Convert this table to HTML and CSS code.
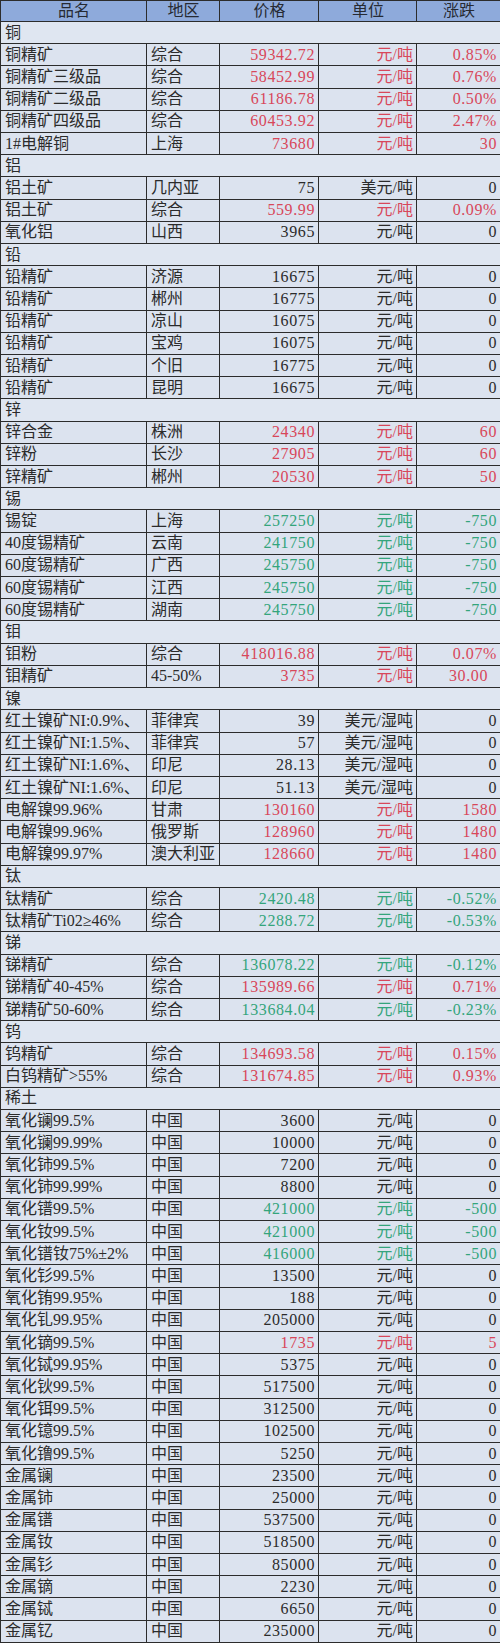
FILE: index.html
```html
<!DOCTYPE html>
<html lang="zh-CN">
<head>
<meta charset="utf-8">
<title>有色金属价格</title>
<link rel="stylesheet" href="styles.css">
</head>
<body>
<table class="price-table">
<colgroup>
<col class="c-name"><col class="c-area"><col class="c-price"><col class="c-unit"><col class="c-chg">
</colgroup>
<thead>
<tr><th>品名</th><th>地区</th><th>价格</th><th>单位</th><th>涨跌</th></tr>
</thead>
<tbody>
<tr class="cat"><td colspan="5">铜</td></tr>
<tr class="r"><td>铜精矿</td><td>综合</td><td>59342.72</td><td>元/吨</td><td>0.85%</td></tr>
<tr class="r"><td>铜精矿三级品</td><td>综合</td><td>58452.99</td><td>元/吨</td><td>0.76%</td></tr>
<tr class="r"><td>铜精矿二级品</td><td>综合</td><td>61186.78</td><td>元/吨</td><td>0.50%</td></tr>
<tr class="r"><td>铜精矿四级品</td><td>综合</td><td>60453.92</td><td>元/吨</td><td>2.47%</td></tr>
<tr class="r"><td>1#电解铜</td><td>上海</td><td>73680</td><td>元/吨</td><td>30</td></tr>
<tr class="cat"><td colspan="5">铝</td></tr>
<tr><td>铝土矿</td><td>几内亚</td><td>75</td><td>美元/吨</td><td>0</td></tr>
<tr class="r"><td>铝土矿</td><td>综合</td><td>559.99</td><td>元/吨</td><td>0.09%</td></tr>
<tr><td>氧化铝</td><td>山西</td><td>3965</td><td>元/吨</td><td>0</td></tr>
<tr class="cat"><td colspan="5">铅</td></tr>
<tr><td>铅精矿</td><td>济源</td><td>16675</td><td>元/吨</td><td>0</td></tr>
<tr><td>铅精矿</td><td>郴州</td><td>16775</td><td>元/吨</td><td>0</td></tr>
<tr><td>铅精矿</td><td>凉山</td><td>16075</td><td>元/吨</td><td>0</td></tr>
<tr><td>铅精矿</td><td>宝鸡</td><td>16075</td><td>元/吨</td><td>0</td></tr>
<tr><td>铅精矿</td><td>个旧</td><td>16775</td><td>元/吨</td><td>0</td></tr>
<tr><td>铅精矿</td><td>昆明</td><td>16675</td><td>元/吨</td><td>0</td></tr>
<tr class="cat"><td colspan="5">锌</td></tr>
<tr class="r"><td>锌合金</td><td>株洲</td><td>24340</td><td>元/吨</td><td>60</td></tr>
<tr class="r"><td>锌粉</td><td>长沙</td><td>27905</td><td>元/吨</td><td>60</td></tr>
<tr class="r"><td>锌精矿</td><td>郴州</td><td>20530</td><td>元/吨</td><td>50</td></tr>
<tr class="cat"><td colspan="5">锡</td></tr>
<tr class="g"><td>锡锭</td><td>上海</td><td>257250</td><td>元/吨</td><td>-750</td></tr>
<tr class="g"><td>40度锡精矿</td><td>云南</td><td>241750</td><td>元/吨</td><td>-750</td></tr>
<tr class="g"><td>60度锡精矿</td><td>广西</td><td>245750</td><td>元/吨</td><td>-750</td></tr>
<tr class="g"><td>60度锡精矿</td><td>江西</td><td>245750</td><td>元/吨</td><td>-750</td></tr>
<tr class="g"><td>60度锡精矿</td><td>湖南</td><td>245750</td><td>元/吨</td><td>-750</td></tr>
<tr class="cat"><td colspan="5">钼</td></tr>
<tr class="r"><td>钼粉</td><td>综合</td><td>418016.88</td><td>元/吨</td><td>0.07%</td></tr>
<tr class="r"><td>钼精矿</td><td>45-50%</td><td>3735</td><td>元/吨</td><td class="inset">30.00</td></tr>
<tr class="cat"><td colspan="5">镍</td></tr>
<tr><td>红土镍矿NI:0.9%、</td><td>菲律宾</td><td>39</td><td>美元/湿吨</td><td>0</td></tr>
<tr><td>红土镍矿NI:1.5%、</td><td>菲律宾</td><td>57</td><td>美元/湿吨</td><td>0</td></tr>
<tr><td>红土镍矿NI:1.6%、</td><td>印尼</td><td>28.13</td><td>美元/湿吨</td><td>0</td></tr>
<tr><td>红土镍矿NI:1.6%、</td><td>印尼</td><td>51.13</td><td>美元/湿吨</td><td>0</td></tr>
<tr class="r"><td>电解镍99.96%</td><td>甘肃</td><td>130160</td><td>元/吨</td><td>1580</td></tr>
<tr class="r"><td>电解镍99.96%</td><td>俄罗斯</td><td>128960</td><td>元/吨</td><td>1480</td></tr>
<tr class="r"><td>电解镍99.97%</td><td>澳大利亚</td><td>128660</td><td>元/吨</td><td>1480</td></tr>
<tr class="cat"><td colspan="5">钛</td></tr>
<tr class="g"><td>钛精矿</td><td>综合</td><td>2420.48</td><td>元/吨</td><td>-0.52%</td></tr>
<tr class="g"><td>钛精矿Ti02≥46%</td><td>综合</td><td>2288.72</td><td>元/吨</td><td>-0.53%</td></tr>
<tr class="cat"><td colspan="5">锑</td></tr>
<tr class="g"><td>锑精矿</td><td>综合</td><td>136078.22</td><td>元/吨</td><td>-0.12%</td></tr>
<tr class="r"><td>锑精矿40-45%</td><td>综合</td><td>135989.66</td><td>元/吨</td><td>0.71%</td></tr>
<tr class="g"><td>锑精矿50-60%</td><td>综合</td><td>133684.04</td><td>元/吨</td><td>-0.23%</td></tr>
<tr class="cat"><td colspan="5">钨</td></tr>
<tr class="r"><td>钨精矿</td><td>综合</td><td>134693.58</td><td>元/吨</td><td>0.15%</td></tr>
<tr class="r"><td>白钨精矿&gt;55%</td><td>综合</td><td>131674.85</td><td>元/吨</td><td>0.93%</td></tr>
<tr class="cat"><td colspan="5">稀土</td></tr>
<tr><td>氧化镧99.5%</td><td>中国</td><td>3600</td><td>元/吨</td><td>0</td></tr>
<tr><td>氧化镧99.99%</td><td>中国</td><td>10000</td><td>元/吨</td><td>0</td></tr>
<tr><td>氧化铈99.5%</td><td>中国</td><td>7200</td><td>元/吨</td><td>0</td></tr>
<tr><td>氧化铈99.99%</td><td>中国</td><td>8800</td><td>元/吨</td><td>0</td></tr>
<tr class="g"><td>氧化镨99.5%</td><td>中国</td><td>421000</td><td>元/吨</td><td>-500</td></tr>
<tr class="g"><td>氧化钕99.5%</td><td>中国</td><td>421000</td><td>元/吨</td><td>-500</td></tr>
<tr class="g"><td>氧化镨钕75%±2%</td><td>中国</td><td>416000</td><td>元/吨</td><td>-500</td></tr>
<tr><td>氧化钐99.5%</td><td>中国</td><td>13500</td><td>元/吨</td><td>0</td></tr>
<tr><td>氧化铕99.95%</td><td>中国</td><td>188</td><td>元/吨</td><td>0</td></tr>
<tr><td>氧化钆99.95%</td><td>中国</td><td>205000</td><td>元/吨</td><td>0</td></tr>
<tr class="r"><td>氧化镝99.5%</td><td>中国</td><td>1735</td><td>元/吨</td><td>5</td></tr>
<tr><td>氧化铽99.95%</td><td>中国</td><td>5375</td><td>元/吨</td><td>0</td></tr>
<tr><td>氧化钬99.5%</td><td>中国</td><td>517500</td><td>元/吨</td><td>0</td></tr>
<tr><td>氧化铒99.5%</td><td>中国</td><td>312500</td><td>元/吨</td><td>0</td></tr>
<tr><td>氧化镱99.5%</td><td>中国</td><td>102500</td><td>元/吨</td><td>0</td></tr>
<tr><td>氧化镥99.5%</td><td>中国</td><td>5250</td><td>元/吨</td><td>0</td></tr>
<tr><td>金属镧</td><td>中国</td><td>23500</td><td>元/吨</td><td>0</td></tr>
<tr><td>金属铈</td><td>中国</td><td>25000</td><td>元/吨</td><td>0</td></tr>
<tr><td>金属镨</td><td>中国</td><td>537500</td><td>元/吨</td><td>0</td></tr>
<tr><td>金属钕</td><td>中国</td><td>518500</td><td>元/吨</td><td>0</td></tr>
<tr><td>金属钐</td><td>中国</td><td>85000</td><td>元/吨</td><td>0</td></tr>
<tr><td>金属镝</td><td>中国</td><td>2230</td><td>元/吨</td><td>0</td></tr>
<tr><td>金属铽</td><td>中国</td><td>6650</td><td>元/吨</td><td>0</td></tr>
<tr><td>金属钇</td><td>中国</td><td>235000</td><td>元/吨</td><td>0</td></tr>
</tbody>
</table>
</body>
</html>
```
FILE: styles.css
```css
html, body {
  margin: 0;
  padding: 0;
  background: #dce3ef;
}

.price-table {
  width: 500px;
  height: 1643px;
  border-collapse: collapse;
  table-layout: fixed;
  font-family: "Liberation Serif", "Noto Sans CJK SC", serif;
  font-size: 16px;
  color: #2b2b2b;
}

.c-name { width: 146px; }
.c-area { width: 73px; }
.c-price { width: 99px; }
.c-unit { width: 98px; }
.c-chg { width: 84px; }

.price-table th,
.price-table td {
  border: 1px solid #2c2c2c;
  padding: 0 3px 0 4px;
  white-space: nowrap;
  overflow: hidden;
  line-height: 20px;
  background: #dce3ef;
  vertical-align: middle;
}

.price-table th {
  background: #8eaadb;
  font-weight: normal;
  text-align: center;
  color: #262a33;
}

.price-table td:nth-child(n+3) {
  text-align: right;
}

.price-table td:nth-child(3),
.price-table td:nth-child(5) {
  letter-spacing: 0.6px;
}

.price-table .cat td {
  background: #dfe6f1;
  text-align: left;
}

.r td:nth-child(n+3) { color: #d8475a; }
.g td:nth-child(n+3) { color: #34a57c; }

.price-table td.inset {
  padding-right: 12px;
}
```
